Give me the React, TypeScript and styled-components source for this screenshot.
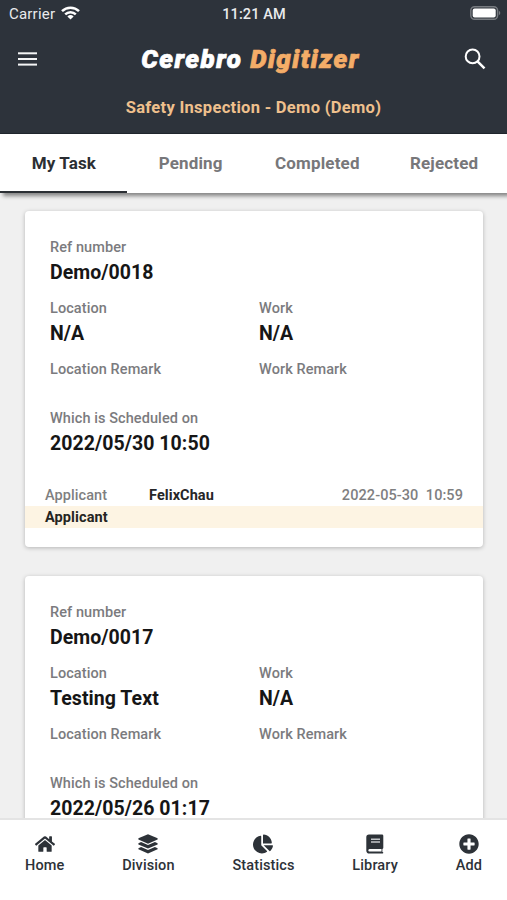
import React from "react";
import styled, { createGlobalStyle } from "styled-components";
import { FaHome, FaChartPie, FaPlusCircle } from "react-icons/fa";

const GlobalStyle = createGlobalStyle`
  * { box-sizing: border-box; }
  body { margin: 0; background: #f0f0f0; font-family: Roboto, "Liberation Sans", sans-serif; }
`;

const Screen = styled.div`
  width: 507px;
  height: 900px;
  display: flex;
  flex-direction: column;
  overflow: hidden;
  background: #f0f0f0;
`;

const Header = styled.header`
  flex: none;
  height: 134px;
  background: #2d333b;
  border-bottom: 1px solid #20262d;
  color: #fff;
`;

const StatusBar = styled.div`
  height: 28px;
  padding: 0 6px 0 9px;
  display: grid;
  grid-template-columns: 1fr auto 1fr;
  align-items: center;
  font-size: 15px;
  line-height: 28px;
  color: #e9ebed;
`;

const Carrier = styled.div`
  display: flex;
  align-items: center;
  gap: 6px;
  letter-spacing: 0.2px;

  svg { margin-bottom: 2px; }
`;

const Clock = styled.div`
  padding: 1px 2px 0 0;
  font-size: 14.5px;
  line-height: 27px;
  font-weight: 500;
  letter-spacing: 0.1px;
`;

const Battery = styled.div`
  display: flex;
  justify-content: flex-end;
  padding-bottom: 2px;
`;

const TitleBar = styled.div`
  height: 62px;
  padding: 0 21px 0 18px;
  display: flex;
  align-items: center;
  justify-content: space-between;
`;

const IconButton = styled.button`
  display: flex;
  padding: 0;
  border: 0;
  background: none;
  color: #fff;
`;

const Brand = styled.h1`
  margin: 0;
  font-size: 26px;
  line-height: 32px;
  font-style: italic;
  font-weight: 900;
  letter-spacing: 1.45px;
  white-space: nowrap;
  -webkit-text-stroke: 0.7px currentColor;
`;

const BrandAccent = styled.span`
  color: #f4ad68;
`;

const Subtitle = styled.div`
  text-align: center;
  font-size: 16.5px;
  line-height: 35px;
  font-weight: 700;
  letter-spacing: 0.3px;
  color: #efc08d;
`;

const Tabs = styled.nav`
  flex: none;
  position: relative;
  z-index: 1;
  height: 59px;
  display: grid;
  grid-template-columns: repeat(4, 1fr);
  background: #fff;
  box-shadow: 3px 3px 4px rgba(0, 0, 0, 0.45);
`;

const Tab = styled.button<{ $active?: boolean }>`
  border: 0;
  padding: 0 0 0 1px;
  background: none;
  border-bottom: 2px solid ${(p) => (p.$active ? "#2b2f34" : "transparent")};
  color: ${(p) => (p.$active ? "#2b2e33" : "#77777a")};
  font: 700 17px Roboto, sans-serif;
  letter-spacing: 0.15px;
`;

const List = styled.main`
  flex: 1;
  min-height: 0;
  overflow: hidden;
  padding: 18px 25px 0;
  display: flex;
  flex-direction: column;
  gap: 29px;
`;

const Card = styled.article`
  flex: none;
  min-height: 336px;
  width: 458px;
  padding-top: 27px;
  border-radius: 4px;
  background: #fff;
  box-shadow: 0 1px 4px rgba(0, 0, 0, 0.25);
`;

const Fields = styled.div`
  display: grid;
  grid-template-columns: 209px 1fr;
  padding-left: 25px;
`;

const Field = styled.div<{ $height: number; $wide?: boolean }>`
  height: ${(p) => p.$height}px;
  grid-column: ${(p) => (p.$wide ? "1 / -1" : "auto")};
`;

const Label = styled.div`
  font-size: 14.5px;
  line-height: 20px;
  font-weight: 500;
  letter-spacing: 0.08px;
  color: #7b7b7e;
`;

const Value = styled.div`
  padding-top: 1px;
  font-size: 19.5px;
  line-height: 28px;
  font-weight: 700;
  letter-spacing: 0.05px;
  color: #161616;
`;

const Applicant = styled.div`
  display: grid;
  grid-template-columns: 104px 1fr auto;
  height: 21px;
  padding: 0 20px;
  font-size: 14.5px;
  line-height: 22px;
  font-weight: 500;
  letter-spacing: 0.08px;
  color: #7f7f81;
`;

const Name = styled.strong`
  font-weight: 700;
  color: #262628;
`;

const Stamp = styled.time`
  white-space: pre;
`;

const Role = styled.div`
  height: 22px;
  padding-left: 20px;
  background: #fdf4e3;
  font-size: 14.5px;
  line-height: 23px;
  font-weight: 700;
  letter-spacing: 0.1px;
  color: #252422;
`;

const BottomNav = styled.nav`
  flex: none;
  height: 82px;
  border-top: 2px solid #e4e4e4;
  padding: 14px 25px 0;
  display: flex;
  justify-content: space-between;
  background: #fff;
`;

const NavItem = styled.a`
  display: flex;
  flex-direction: column;
  align-items: center;
  gap: 2px;
  font-size: 14.5px;
  line-height: 20px;
  font-weight: 500;
  letter-spacing: 0.12px;
  color: #2d3238;

  svg { width: 20px; height: 20px; }
`;

type Task = {
  ref: string;
  location: string;
  work: string;
  scheduled: string;
  applicant?: { name: string; stamp: string };
};

const tasks: Task[] = [
  {
    ref: "Demo/0018",
    location: "N/A",
    work: "N/A",
    scheduled: "2022/05/30 10:50",
    applicant: { name: "FelixChau", stamp: "2022-05-30  10:59" },
  },
  { ref: "Demo/0017", location: "Testing Text", work: "N/A", scheduled: "2022/05/26 01:17" },
];

const StackIcon = () => (
  <svg viewBox="0 0 20 20" fill="currentColor">
    <path d="M10 .2 19.6 4.300v1.200L10 9.700.4 5.500V4.300Z" />
    <path d="m.4 9.300 2.700-1.200L10 11.100l6.900-3 2.700 1.200v1.100L10 14.600.4 10.400Z" />
    <path d="m.4 14.200 2.700-1.200L10 16l6.900-3 2.700 1.200v1.100L10 19.600.4 15.300Z" />
  </svg>
);

const BookIcon = () => (
  <svg viewBox="0 0 20 20">
    <path d="M4 .5h13q1.300 0 1.300 1.300v12q0 1-.9 1.300v3h.2q.7 0 .7.700t-.7.700H4.400Q1.300 19.500 1.300 16.400V3.300Q1.300.500 4 .500Z" fill="currentColor" />
    <path d="M6 5.300h9M6 8h9" stroke="#c3c6c9" strokeWidth="1.500" />
    <path d="M4.500 14.900h12v2.700h-12q-1.200 0-1.200-1.300t1.200-1.400Z" fill="#fff" />
  </svg>
);

const navItems = [
  { label: "Home", Icon: FaHome },
  { label: "Division", Icon: StackIcon },
  { label: "Statistics", Icon: FaChartPie },
  { label: "Library", Icon: BookIcon },
  { label: "Add", Icon: FaPlusCircle },
];

const WifiIcon = () => (
  <svg width="19" height="14" viewBox="0 0 19 14" fill="none" stroke="#fff" strokeWidth="2.5">
    <path d="M1 5.2a12.2 12.2 0 0 1 17 0" />
    <path d="M4.2 8.4a7.6 7.6 0 0 1 10.6 0" />
    <path d="M9.5 13.6 6.4 10.4a4.5 4.5 0 0 1 6.2 0Z" fill="#fff" stroke="none" />
  </svg>
);

const BatteryIcon = () => (
  <svg width="31" height="14" viewBox="0 0 31 14">
    <rect x="0.8" y="0.7" width="26.8" height="12.6" rx="3.8" fill="#33383f" stroke="#777b80" strokeWidth="1.4" />
    <rect x="2.7" y="2.5" width="23" height="9" rx="2" fill="#fff" />
    <path d="M28.9 4.7q1.4.7 1.4 2.3t-1.4 2.3z" fill="#777b80" />
  </svg>
);

const MenuIcon = () => (
  <svg width="19" height="14" viewBox="0 0 19 14" fill="#f4f5f6">
    <rect y="0.3" width="19" height="2" />
    <rect y="6" width="19" height="2" />
    <rect y="11.6" width="19" height="2" />
  </svg>
);

const SearchIcon = () => (
  <svg width="22" height="22" viewBox="0 0 22 22" fill="none" stroke="#fff" strokeWidth="2">
    <circle cx="8.6" cy="8.4" r="6.9" />
    <path d="m13.5 13.3 7 7" strokeWidth="2.5" />
  </svg>
);

export default function App() {
  return (
    <Screen>
      <GlobalStyle />
      <Header>
        <StatusBar>
          <Carrier>Carrier <WifiIcon /></Carrier>
          <Clock>11:21 AM</Clock>
          <Battery><BatteryIcon /></Battery>
        </StatusBar>
        <TitleBar>
          <IconButton aria-label="Menu"><MenuIcon /></IconButton>
          <Brand>Cerebro <BrandAccent>Digitizer</BrandAccent></Brand>
          <IconButton aria-label="Search"><SearchIcon /></IconButton>
        </TitleBar>
        <Subtitle>Safety Inspection - Demo (Demo)</Subtitle>
      </Header>
      <Tabs>
        <Tab $active>My Task</Tab>
        <Tab>Pending</Tab>
        <Tab>Completed</Tab>
        <Tab>Rejected</Tab>
      </Tabs>
      <List>
        {tasks.map((task) => (
          <Card key={task.ref}>
            <Fields>
              <Field $height={61} $wide><Label>Ref number</Label><Value>{task.ref}</Value></Field>
              <Field $height={61}><Label>Location</Label><Value>{task.location}</Value></Field>
              <Field $height={61}><Label>Work</Label><Value>{task.work}</Value></Field>
              <Field $height={49}><Label>Location Remark</Label></Field>
              <Field $height={49}><Label>Work Remark</Label></Field>
              <Field $height={76} $wide><Label>Which is Scheduled on</Label><Value>{task.scheduled}</Value></Field>
            </Fields>
            {task.applicant && (
              <>
                <Applicant>
                  <span>Applicant</span>
                  <Name>{task.applicant.name}</Name>
                  <Stamp>{task.applicant.stamp}</Stamp>
                </Applicant>
                <Role>Applicant</Role>
              </>
            )}
          </Card>
        ))}
      </List>
      <BottomNav>
        {navItems.map(({ label, Icon }) => (
          <NavItem key={label}><Icon />{label}</NavItem>
        ))}
      </BottomNav>
    </Screen>
  );
}
